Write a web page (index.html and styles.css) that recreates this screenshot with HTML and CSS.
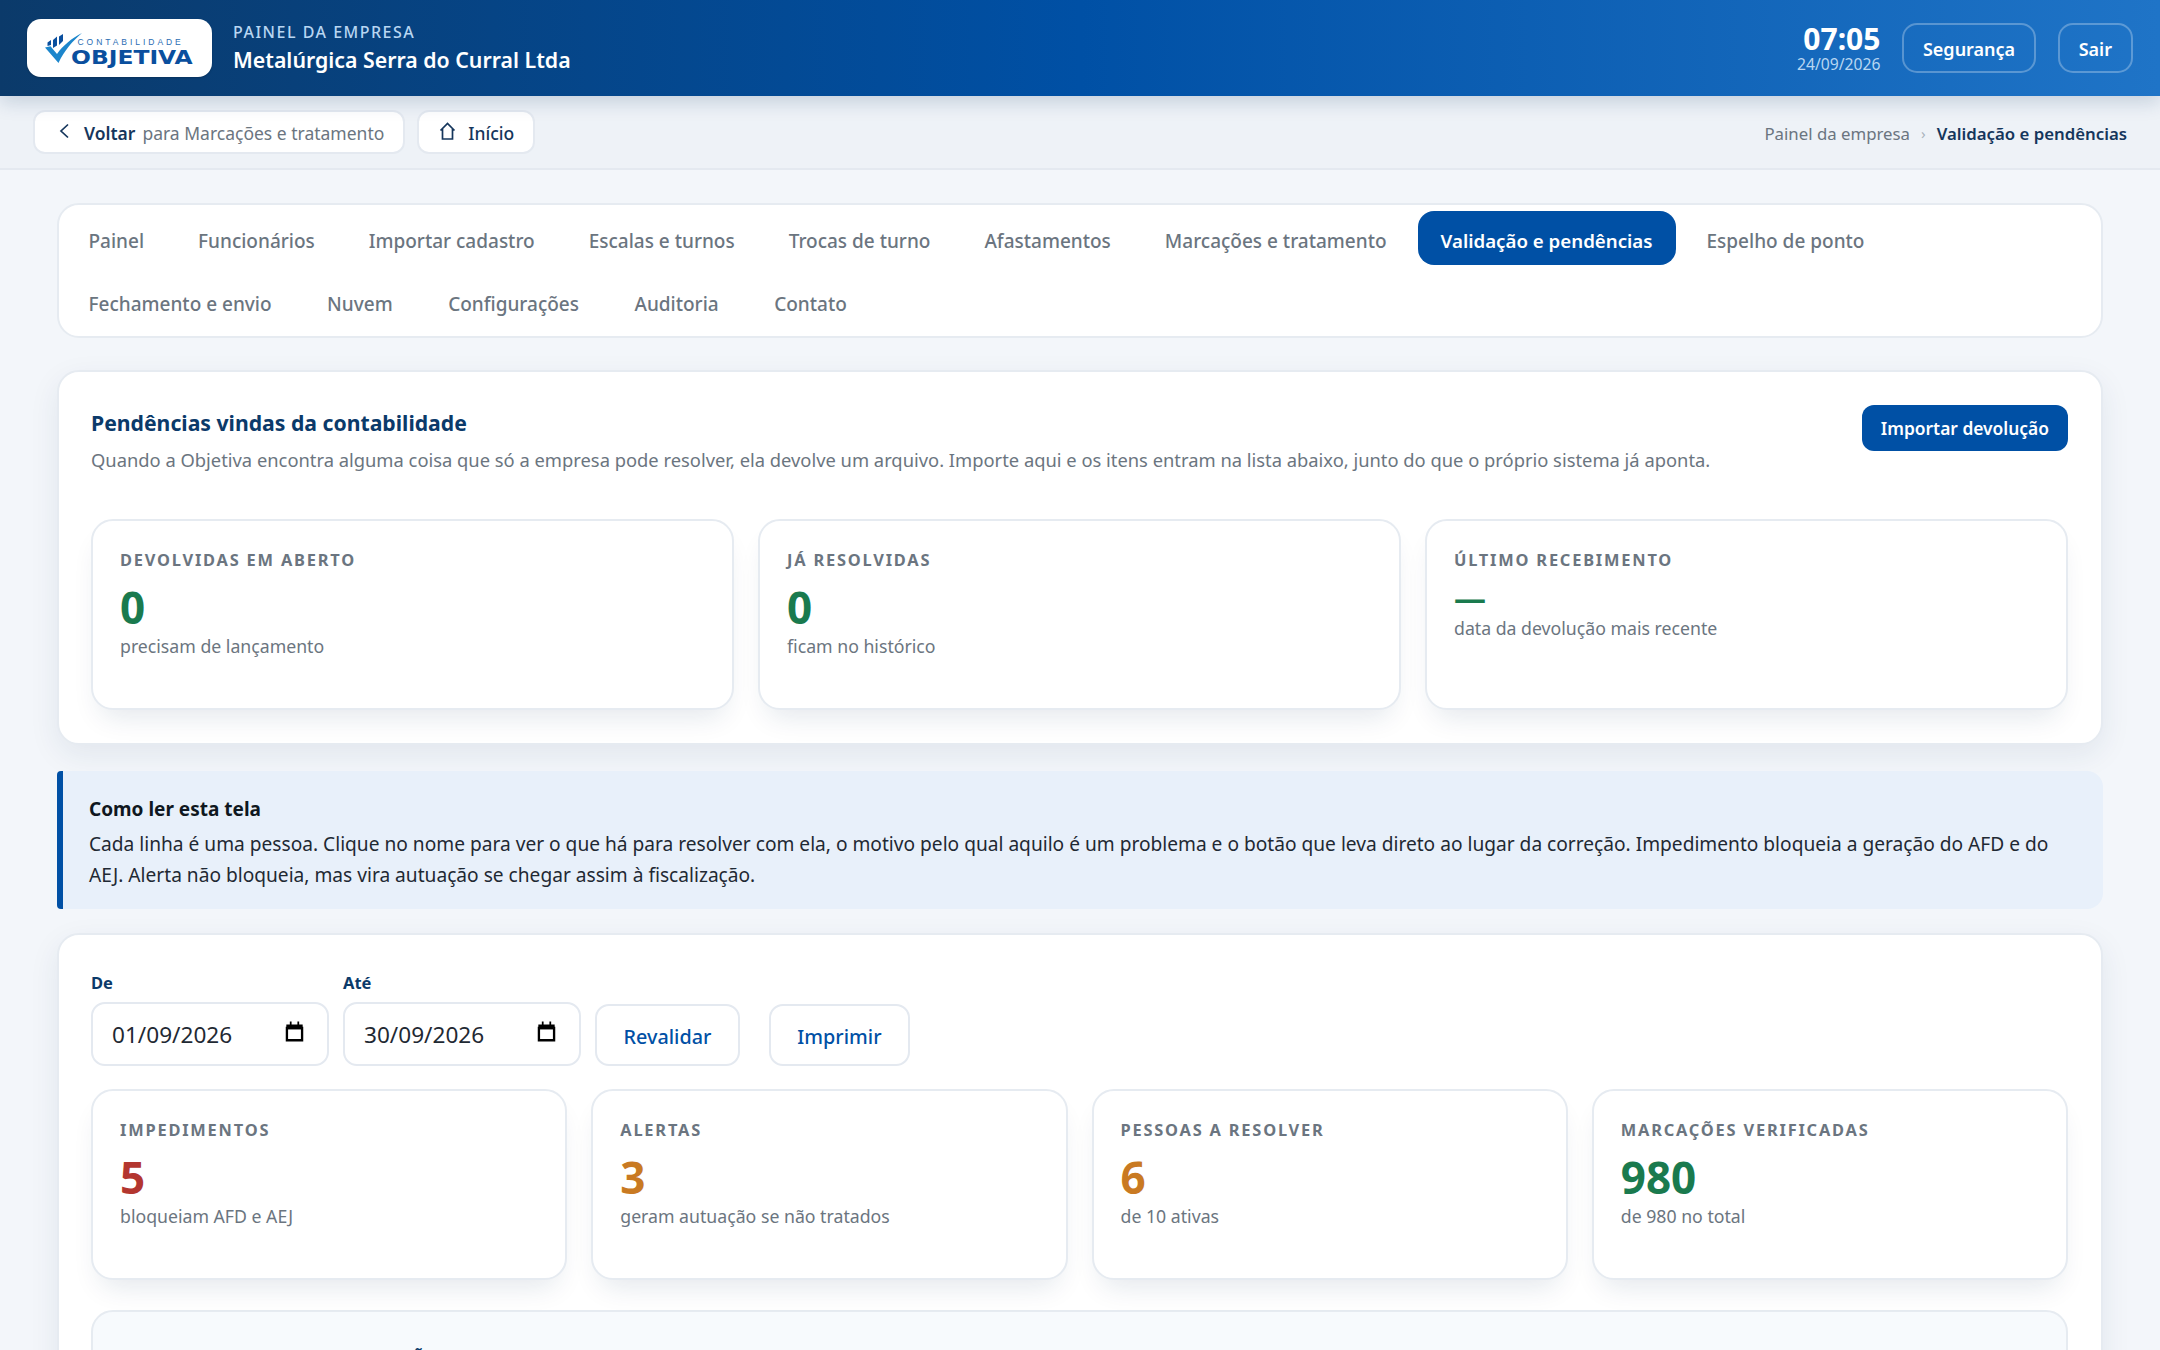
FILE: index.html
```html
<!DOCTYPE html>
<html lang="pt-BR">
<head>
<meta charset="utf-8">
<title>Validação e pendências</title>
<link rel="stylesheet" href="styles.css">
</head>
<body>
<header class="topbar">
  <div class="brand">
    <div class="logo">
      <svg class="logo-mark" viewBox="0 0 37 30" aria-hidden="true">
        <path d="M0 14.500l5.500-1.200L12 21C18 12.500 27 5 37 0 28 7.500 19 18 13.500 30z" fill="#1c86cc"/>
        <path d="M2.500 9.500 6 7v5l-3.500 1zM8 7l4-3.500v9L8 15zM14 3.500 18 1v7l-4 4z" fill="#0a4f9e"/>
      </svg>
      <div class="logo-text">
        <span class="logo-small">CONTABILIDADE</span>
        <span class="logo-big">OBJETIVA</span>
      </div>
    </div>
    <div class="company">
      <span class="company-label">PAINEL DA EMPRESA</span>
      <strong class="company-name">Metalúrgica Serra do Curral Ltda</strong>
    </div>
  </div>
  <div class="top-actions">
    <div class="clock"><strong>07:05</strong><span>24/09/2026</span></div>
    <a class="ghost-btn">Segurança</a>
    <a class="ghost-btn">Sair</a>
  </div>
</header>

<div class="subbar">
  <div class="sub-left">
    <a class="pill"><svg class="ico" viewBox="0 0 18 18"><path d="M14 2.500 7 9l7 6.500"/></svg><b>Voltar</b> <span>para Marcações e tratamento</span></a>
    <a class="pill"><svg class="ico" viewBox="0 0 18 18"><path d="M2.500 8.500 9.500 1.500l7 7M4.500 7v10h10V7"/></svg><em>Início</em></a>
  </div>
  <div class="crumbs"><span>Painel da empresa</span><i>›</i><b>Validação e pendências</b></div>
</div>

<main class="content">
  <nav class="card tabs">
    <a>Painel</a><a>Funcionários</a><a>Importar cadastro</a><a>Escalas e turnos</a><a>Trocas de turno</a><a>Afastamentos</a><a>Marcações e tratamento</a><a class="active">Validação e pendências</a><a>Espelho de ponto</a><a>Fechamento e envio</a><a>Nuvem</a><a>Configurações</a><a>Auditoria</a><a>Contato</a>
  </nav>

  <section class="card panel">
    <div class="panel-head">
      <div>
        <h2>Pendências vindas da contabilidade</h2>
        <p>Quando a Objetiva encontra alguma coisa que só a empresa pode resolver, ela devolve um arquivo. Importe aqui e os itens entram na lista abaixo, junto do que o próprio sistema já aponta.</p>
      </div>
      <a class="primary">Importar devolução</a>
    </div>
    <div class="stats three">
      <div class="stat"><h3>DEVOLVIDAS EM ABERTO</h3><strong class="green">0</strong><span>precisam de lançamento</span></div>
      <div class="stat"><h3>JÁ RESOLVIDAS</h3><strong class="green">0</strong><span>ficam no histórico</span></div>
      <div class="stat"><h3>ÚLTIMO RECEBIMENTO</h3><strong class="green dash">—</strong><span>data da devolução mais recente</span></div>
    </div>
  </section>

  <aside class="note">
    <strong>Como ler esta tela</strong>
    <p>Cada linha é uma pessoa. Clique no nome para ver o que há para resolver com ela, o motivo pelo qual aquilo é um problema e o botão que leva direto ao lugar da correção. Impedimento bloqueia a geração do AFD e do AEJ. Alerta não bloqueia, mas vira autuação se chegar assim à fiscalização.</p>
  </aside>

  <section class="card panel lower">
    <form class="filters">
      <label>De<span class="date">01/09/2026<svg viewBox="0 0 16 18"><path class="cal-top" d="M1 3h3V0.500h1.500V3h5V0.500H12V3h3v4H1z"/><path d="M1.500 6h13v10.500h-13z"/></svg></span></label>
      <label>Até<span class="date">30/09/2026<svg viewBox="0 0 16 18"><path class="cal-top" d="M1 3h3V0.500h1.500V3h5V0.500H12V3h3v4H1z"/><path d="M1.500 6h13v10.500h-13z"/></svg></span></label>
      <a class="outline first">Revalidar</a>
      <a class="outline">Imprimir</a>
    </form>
    <div class="stats four">
      <div class="stat"><h3>IMPEDIMENTOS</h3><strong class="red">5</strong><span>bloqueiam AFD e AEJ</span></div>
      <div class="stat"><h3>ALERTAS</h3><strong class="amber">3</strong><span>geram autuação se não tratados</span></div>
      <div class="stat"><h3>PESSOAS A RESOLVER</h3><strong class="amber">6</strong><span>de 10 ativas</span></div>
      <div class="stat"><h3>MARCAÇÕES VERIFICADAS</h3><strong class="green">980</strong><span>de 980 no total</span></div>
    </div>
    <div class="subpanel"><h2>NOMES E RESUMO DA SITUAÇÃO</h2></div>
  </section>
</main>
</body>
</html>
```
FILE: styles.css
```css
* { box-sizing: border-box; }
html, body { margin: 0; height: 1350px; overflow: hidden; }
body { background: #f3f6fa; color: #1f2933; font-family: "Noto Sans", "Open Sans", sans-serif; font-size: 18px; }
a { display: inline-flex; align-items: center; }

.topbar { height: 96px; display: flex; justify-content: space-between; align-items: center; padding: 0 27px; background: linear-gradient(90deg, #0b3a6a 0%, #0050a5 50%, #1f74c7 100%); box-shadow: 0 6px 18px rgba(11,58,106,.18); position: relative; color: #fff; }
.brand { display: flex; align-items: center; gap: 21px; }
.logo { width: 185px; height: 58px; padding-left: 18px; background: #fff; border-radius: 14px; display: flex; align-items: center; box-shadow: 0 1px 2px rgba(0,0,0,.2); }
.logo-mark { width: 37px; height: 30px; flex: none; margin-right: -11.500px; position: relative; z-index: 1; }
.logo-text { display: flex; flex-direction: column; align-items: flex-start; line-height: 1; margin-top: 8px; }
.logo-small { font-family: "Liberation Sans", sans-serif; font-size: 8.500px; line-height: 9px; letter-spacing: 2.950px; color: #2a6db3; margin-left: 7px; margin-bottom: 2px; }
.logo-big { font-family: "DejaVu Sans", sans-serif; font-weight: 700; font-size: 20px; color: #0a4f9e; line-height: 17px; transform: scaleX(1.170); transform-origin: left center; }
.company { display: flex; flex-direction: column; gap: 2px; }
.company-label { font-size: 16px; font-weight: 500; letter-spacing: 1.500px; color: #b8d6f2; line-height: 22px; }
.company-name { font-size: 21.300px; font-weight: 600; line-height: 30px; }
.top-actions { display: flex; align-items: center; gap: 21.500px; }
.clock { display: flex; flex-direction: column; align-items: flex-end; }
.clock strong { font-size: 30px; line-height: 32px; font-weight: 700; }
.clock span { font-size: 15.700px; line-height: 19px; color: #b8d6f2; }
.ghost-btn { height: 50px; padding: 2px 19px 0; border: 2px solid rgba(255,255,255,.28); border-radius: 15px; font-size: 18px; font-weight: 600; color: #fff; }

.subbar { height: 74px; display: flex; justify-content: space-between; align-items: center; padding: 0 33px; background: #eef2f7; border-bottom: 2px solid #e4e9f0; }
.sub-left { display: flex; gap: 12px; margin-top: -1px; }
.pill { height: 44px; padding: 2px 19px 0; gap: 7px; background: #fff; border: 2px solid #e4e9f0; border-radius: 12px; font-size: 17.500px; color: #15365c; white-space: pre; }
.pill b { font-weight: 600; }
.pill span { color: #6b7580; }
.pill em { font-style: normal; font-weight: 500; }
.ico { width: 18px; height: 18px; flex: none; fill: none; stroke: #15365c; stroke-width: 1.700; margin: -3px 5px 0 0; }
.crumbs { display: flex; align-items: center; gap: 11px; font-size: 16.800px; color: #6b7580; padding-top: 2px; }
.crumbs i { font-style: normal; color: #a9b2bc; font-size: 15px; }
.crumbs b { font-weight: 600; color: #15365c; }

.content { padding: 33px 57px 0; display: flex; flex-direction: column; }
.card { background: #fff; border: 2px solid #e6ebf1; border-radius: 22px; }
.tabs { height: 135px; padding: 6px 6.500px; display: flex; flex-wrap: wrap; align-content: flex-start; row-gap: 9px; }
.tabs a { height: 54px; padding: 5px 23px 0; margin-right: 8px; font-size: 19px; font-weight: 500; color: #6b7580; border-radius: 16px; }
.tabs a:nth-child(n+10) { margin-right: 9.500px; }
.tabs a.active { background: #0050a5; color: #fff; font-weight: 600; font-size: 18.700px; }

.panel { margin-top: 32px; padding: 33px 33px 33px 32px; box-shadow: 0 10px 30px rgba(20,50,90,.08); }
.panel-head { display: flex; justify-content: space-between; align-items: flex-start; gap: 20px; }
.panel-head h2 { margin: 3px 0 0; font-size: 21.200px; line-height: 30px; font-weight: 700; color: #0b3a6a; }
.panel-head p { margin: 7px 0 0; font-size: 18.350px; line-height: 30px; color: #6b7580; }
.primary { height: 46px; padding: 0 19px; background: #0050a5; color: #fff; border-radius: 12px; font-size: 17.400px; font-weight: 600; white-space: nowrap; }

.stats { display: grid; gap: 24px; margin-top: 44px; }
.stats.three { grid-template-columns: repeat(3, 1fr); }
.stats.four { grid-template-columns: repeat(4, 1fr); margin-top: 23px; }
.stat { height: 191px; padding: 28px 27px; background: #fff; border: 2px solid #e6ebf1; border-radius: 22px; display: flex; flex-direction: column; box-shadow: 0 16px 28px -10px rgba(20,50,90,.12); }
.stat h3 { margin: 0; font-size: 16.400px; line-height: 22px; font-weight: 700; letter-spacing: 1.800px; color: #6b7580; }
.stat strong { font-size: 44px; line-height: 48px; font-weight: 700; margin-top: 12px; }
.stat strong.dash { font-size: 32px; line-height: 30px; }
.stat span { font-size: 17.700px; line-height: 26px; color: #6b7580; margin-top: 2px; }
.green { color: #1a7a4e; }
.red { color: #b3362f; }
.amber { color: #c97a22; }

.note { margin-top: 26px; height: 138px; padding: 24px 26px 0; background: #e8f0fa; border-left: 6px solid #0050a5; border-radius: 4px 16px 16px 4px; }
.note strong { display: block; font-size: 19px; line-height: 28px; font-weight: 700; color: #0f1720; }
.note p { margin: 6px 0 0; font-size: 19.150px; line-height: 30.500px; color: #1f2933; }

.panel.lower { margin-top: 24px; padding: 36px 33px 0 32px; height: 700px; }
.filters { display: flex; align-items: flex-end; gap: 14.500px; }
.filters label { display: flex; flex-direction: column; gap: 7px; font-size: 16.500px; line-height: 24px; font-weight: 700; color: #0b3a6a; }
.date { width: 237.500px; height: 64px; padding: 2px 23px 0 19px; display: flex; align-items: center; justify-content: space-between; background: #fff; border: 2px solid #e4e9f0; border-radius: 14px; font-size: 22.600px; font-weight: 400; color: #1f2933; }
.date svg { width: 19px; height: 21px; fill: none; stroke: #000; stroke-width: 2; margin-top: -8px; }
.date svg .cal-top { fill: #000; stroke: none; }
.outline { height: 62px; padding: 2px 26.500px 0; background: #fff; border: 2px solid #e4e9f0; border-radius: 14px; font-size: 19.800px; font-weight: 500; color: #0050a5; }
.outline.first { margin-right: 14.500px; }
.subpanel { margin-top: 30px; height: 200px; padding: 34px 39px; background: #f7fafd; border: 2px solid #e6ebf1; border-radius: 22px; }
.subpanel h2 { margin: 0; font-size: 16.400px; line-height: 22px; font-weight: 700; letter-spacing: 1.800px; color: #0b3a6a; }
```
